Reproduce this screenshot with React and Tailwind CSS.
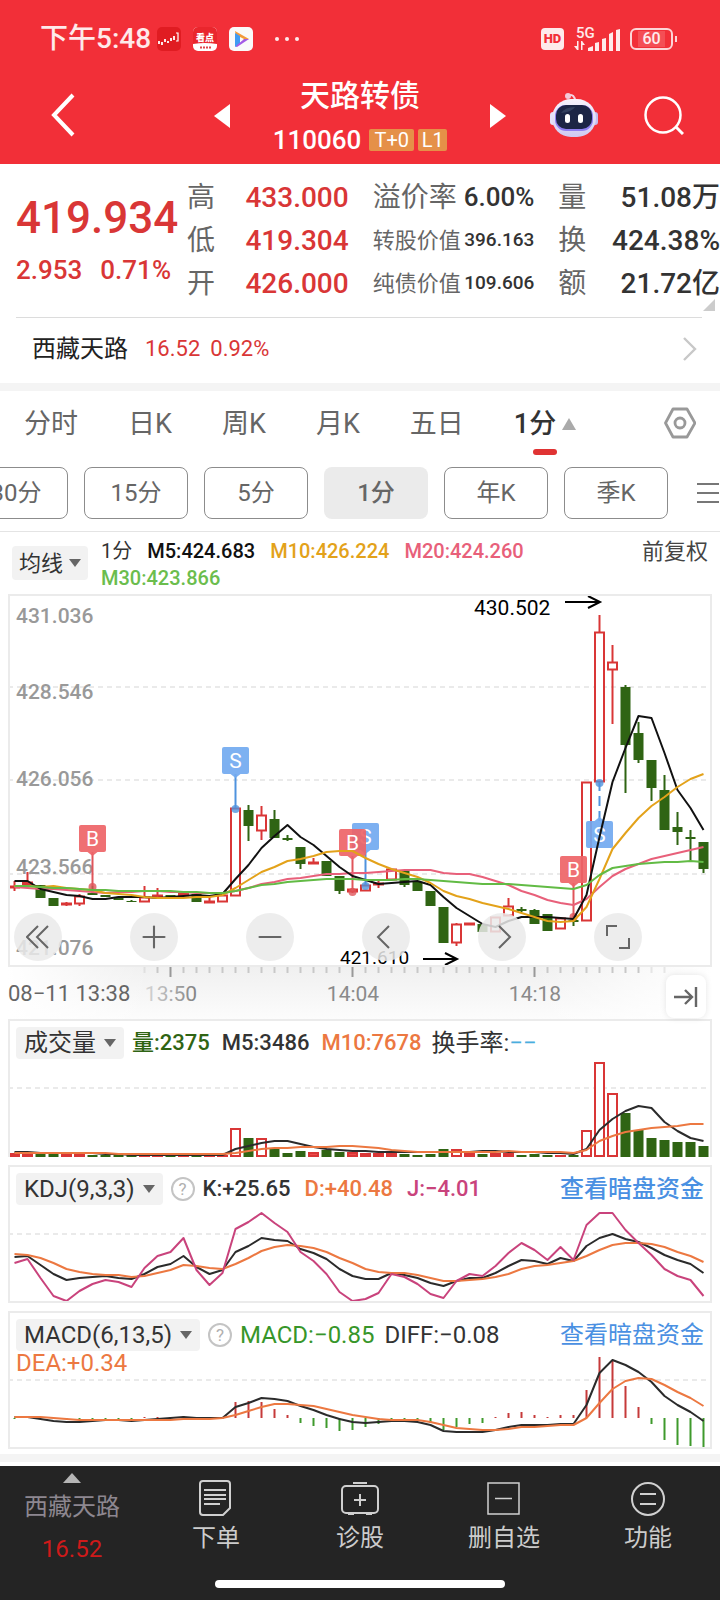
import React, { useState } from 'react';
import { Plus, Minus } from 'lucide-react';

const RED = '#d93636';
const GREEN = '#2f6413';
const STEP = 13;
const cx = i => 6.5 + i * STEP;

// [high, bodyTop, bodyBottom, low, rising]
const candles = [
  [287, 292, 294, 297, 1], [278, 288, 291, 291, 1], [291, 291, 304, 304, 0], [304, 304, 312, 312, 0],
  [308, 309, 311, 312, 1], [300, 302, 310, 312, 1], [292, 299, 301, 301, 0], [301, 301, 303, 303, 0],
  [303, 303, 306, 306, 0], [306, 307, 308, 308, 0], [292, 303, 308, 308, 1], [294, 301, 303, 303, 1],
  [301, 301, 303, 303, 0], [299, 299, 302, 302, 1], [300, 300, 308, 308, 0], [302, 307, 309, 309, 1],
  [301, 301, 308, 308, 1], [214, 214, 302, 302, 1], [211, 216, 232, 247, 0], [212, 221, 237, 246, 1],
  [216, 225, 244, 244, 0], [241, 244, 246, 247, 0], [253, 253, 270, 275, 0], [264, 268, 270, 270, 1],
  [267, 267, 282, 282, 0], [282, 282, 297, 300, 0], [294, 295, 298, 299, 1], [290, 291, 297, 297, 1],
  [287, 289, 291, 294, 1], [275, 275, 286, 286, 1], [277, 277, 291, 293, 0], [288, 288, 297, 297, 0],
  [297, 297, 312, 312, 0], [313, 313, 349, 349, 0], [329, 330, 349, 352, 1], [329, 329, 331, 331, 1],
  [330, 330, 338, 338, 0], [323, 323, 338, 338, 1], [304, 312, 322, 322, 1], [313, 315, 317, 318, 0],
  [315, 316, 330, 330, 0], [320, 320, 337, 337, 0], [324, 324, 335, 335, 1], [322, 326, 328, 332, 0],
  [188, 188, 327, 327, 1], [21, 38, 188, 188, 1], [51, 68, 76, 130, 1], [91, 93, 151, 199, 0],
  [128, 139, 166, 169, 0], [166, 166, 194, 207, 0], [181, 196, 236, 236, 0], [218, 233, 238, 251, 0],
  [236, 243, 245, 268, 0], [248, 248, 275, 279, 0]
];

const averages = [
  { color: '#e8607a', data: [293, 294, 295, 295, 296, 297, 298, 299, 298, 298, 297, 297, 298, 298, 299, 299, 299, 297, 294, 290, 288, 285, 284, 282, 280, 280, 279, 279, 278, 277, 276, 276, 276, 279, 280, 280, 283, 287, 291, 297, 301, 306, 309, 311, 305, 293, 282, 275, 270, 265, 262, 259, 256, 253] },
  { color: '#111111', data: [287, 287, 295, 298, 301, 302, 305, 305, 303, 303, 303, 304, 303, 302, 301, 302, 300, 285, 271, 254, 242, 231, 243, 251, 262, 273, 282, 286, 290, 289, 288, 287, 291, 303, 314, 322, 330, 333, 327, 323, 323, 323, 324, 325, 301, 243, 188, 154, 122, 124, 159, 196, 214, 236] },
  { color: '#e3a21a', data: [292, 292, 293, 292, 294, 295, 296, 299, 300, 301, 303, 304, 304, 304, 303, 303, 301, 294, 286, 278, 273, 267, 265, 262, 258, 257, 257, 264, 270, 275, 279, 283, 289, 297, 302, 305, 309, 312, 315, 319, 323, 327, 328, 327, 313, 285, 255, 239, 224, 212, 203, 193, 185, 180] },
  { color: '#62bb45', data: [292, 292, 293, 294, 294, 295, 296, 296, 297, 297, 297, 297, 297, 298, 298, 299, 299, 297, 294, 291, 290, 288, 287, 286, 285, 285, 285, 286, 286, 286, 285, 285, 286, 287, 288, 289, 290, 290, 290, 291, 292, 293, 294, 295, 291, 281, 274, 272, 270, 269, 268, 268, 267, 268] }
];

const volumes = [4, 4, 3, 3, 4, 4, 2, 2, 2, 2, 3, 3, 1, 3, 2, 2, 2, 29, 19, 19, 8, 4, 6, 5, 7, 5, 5, 4, 4, 4, 3, 2, 3, 8, 8, 4, 3, 4, 4, 2, 3, 2, 2, 2, 27, 95, 64, 44, 27, 19, 17, 15, 15, 11];
const volumeLines = [
  { color: '#2b2b2b', data: [133, 133, 134, 134, 134, 134, 134, 135, 135, 136, 136, 136, 136, 136, 136, 136, 136, 130, 127, 124, 122, 122, 125, 128, 130, 131, 132, 132, 133, 133, 133, 133, 133, 133, 133, 133, 132, 132, 133, 133, 133, 134, 134, 135, 130, 111, 100, 92, 87, 89, 103, 112, 119, 122] },
  { color: '#ec7841', data: [134, 134, 134, 134, 134, 134, 134, 134, 135, 135, 135, 135, 135, 135, 135, 135, 135, 134, 132, 130, 129, 129, 128, 128, 128, 127, 127, 128, 129, 131, 132, 133, 133, 133, 133, 133, 133, 133, 132, 133, 133, 133, 133, 134, 131, 122, 117, 113, 111, 109, 108, 107, 105, 105] }
];

const kdjLines = [
  { color: '#2b2b2b', data: [92, 91, 100, 109, 115, 113, 112, 111, 113, 114, 109, 102, 99, 91, 102, 109, 105, 87, 81, 73, 75, 76, 84, 88, 94, 104, 111, 114, 114, 108, 110, 113, 118, 121, 116, 113, 113, 108, 101, 95, 96, 99, 93, 96, 81, 73, 69, 74, 77, 83, 90, 95, 99, 108] },
  { color: '#ec7841', data: [89, 90, 93, 98, 104, 107, 109, 110, 110, 112, 111, 108, 105, 100, 101, 103, 104, 99, 93, 86, 82, 80, 81, 83, 87, 93, 98, 104, 107, 108, 108, 110, 113, 116, 116, 115, 114, 112, 109, 104, 101, 100, 98, 96, 91, 85, 80, 78, 78, 79, 82, 87, 91, 97] },
  { color: '#c9437c', data: [98, 94, 113, 131, 136, 126, 119, 115, 117, 122, 103, 91, 87, 73, 105, 120, 108, 64, 57, 48, 58, 67, 87, 96, 109, 127, 136, 134, 128, 109, 112, 119, 129, 133, 116, 109, 111, 101, 88, 78, 85, 95, 82, 95, 60, 48, 48, 65, 78, 90, 104, 111, 115, 131] }
];

const macdBars = [-1, 0, 0, 0, -1, -1, -1, -1, -1, -1, 1, 1, 1, 2, 1, 1, 0, 16, 17, 16, 9, 3, -5, -8, -10, -13, -12, -9, -6, -2, -3, -3, -5, -12, -9, -6, -5, 1, 5, 6, 3, 1, 3, 3, 28, 61, 57, 32, 11, -6, -22, -27, -28, -30];
const macdLines = [
  { color: '#2b2b2b', data: [106, 106, 108, 110, 111, 111, 110, 109, 109, 110, 109, 108, 107, 106, 107, 107, 107, 96, 92, 87, 88, 90, 95, 99, 104, 108, 111, 112, 111, 110, 110, 111, 114, 120, 121, 121, 121, 119, 116, 114, 114, 114, 113, 113, 94, 62, 49, 54, 61, 71, 85, 94, 101, 110] },
  { color: '#ec7841', data: [106, 106, 106, 107, 108, 109, 109, 109, 109, 109, 109, 109, 109, 108, 108, 108, 107, 104, 100, 96, 93, 93, 94, 95, 98, 101, 104, 106, 108, 109, 109, 109, 111, 114, 117, 118, 119, 119, 118, 116, 116, 115, 114, 114, 107, 92, 78, 70, 67, 68, 74, 81, 87, 95] }
];

const priceLabels = [['431.036', 29], ['428.546', 105], ['426.056', 192], ['423.566', 280], ['421.076', 361]];
const trades = [
  { i: 6, type: 'B', top: 231, dot: 292 },
  { i: 17, type: 'S', top: 153, dot: 214 },
  { i: 27, type: 'S', top: 229, dot: 291 },
  { i: 26, type: 'B', top: 235, dot: 297 },
  { i: 43, type: 'B', top: 262, dot: 322 },
  { i: 45, type: 'S', top: 227, dot: 188 }
];

const Lines = ({ lines }) => lines.map(({ color, data }) => <polyline key={color} fill="none" stroke={color} strokeWidth="2" strokeLinejoin="round" points={data.map((y, i) => `${cx(i)},${y}`).join(' ')} />);

const GridLine = ({ y }) => <line x1="0" x2="698" y1={y} y2={y} stroke="#e4e4e4" strokeWidth="1.5" strokeDasharray="5 4" />;

const Caret = () => <svg viewBox="0 0 12 8" className="h-2 w-3 shrink-0" aria-hidden="true"><path d="M0 0h12L6 8z" fill="#666" /></svg>;

function TradeMark({ i, type, top, dot }) {
  const x = cx(i);
  const buy = type === 'B';
  const above = dot > top;
  const line = buy ? '#e0555a' : '#4f93de';
  const box = buy ? '#ee6468' : '#72aaf0';
  return <g>
      <line x1={x} x2={x} y1={above ? top + 27 : top} y2={dot} stroke={line} strokeWidth="2" strokeDasharray={above ? undefined : '10 5'} />
      <circle cx={x} cy={dot + 1} r="4" fill={line} opacity="0.8" />
      <g opacity="0.92">
        <rect x={x - 13.5} y={top} width="27" height="27" rx="2" fill={box} />
        <path d={above ? `M${x - 5} ${top + 27}h10l-5 4z` : `M${x - 5} ${top}h10l-5 -4z`} fill={box} />
      </g>
      <text x={x} y={top + 21} textAnchor="middle" fontSize="21" fill="#fff">{type}</text>
    </g>;
}

function PriceChart() {
  return <svg viewBox="2 2 700 369" className="block w-full [grid-area:1/1]" role="img" aria-label="1分K线">
      {[93, 186, 280].map(y => <GridLine key={y} y={y} />)}
      {priceLabels.map(([label, y]) => <text key={label} x="8" y={y} fontSize="21" fontWeight="500" fill="#999">{label}</text>)}
      {candles.map(([high, top, bottom, low, up], i) => {
      const x = cx(i);
      if (!up) {
        return <g key={i} fill={GREEN}>
              <rect x={x - 1} y={high} width="2" height={low - high} />
              <rect x={x - 5} y={top} width="10" height={bottom - top} />
            </g>;
      }
      return <g key={i} stroke={RED} strokeWidth="2">
            <line x1={x} x2={x} y1={high} y2={top} />
            <line x1={x} x2={x} y1={bottom} y2={low} />
            <rect x={x - 4.5} y={top + 0.5} width="9" height={Math.max(bottom - top - 1, 1)} fill={bottom - top < 4 ? RED : '#fff'} />
          </g>;
    })}
      {trades.map(t => <TradeMark key={t.i} {...t} />)}
      <Lines lines={averages} />
      <g fill="none" stroke="#000" strokeWidth="2">
        <path d="M557 8h34M580 2l12 6l-12 6" />
        <path d="M415 365h34M437 359l12 6l-12 6" />
      </g>
      <text x="466" y="21" fontSize="21">430.502</text>
      <text x="332" y="370" fontSize="19">421.610</text>
    </svg>;
}

function ChartTools() {
  const btn = 'flex size-12 items-center justify-center rounded-full bg-[#eaeaea]/85 text-[#666]';
  return <div className="z-10 flex items-end gap-[68px] self-end pb-1 pl-1 [grid-area:1/1]">
      <button className={btn} aria-label="最早">
        <svg viewBox="0 0 24 24" className="size-6" fill="none" stroke="currentColor" strokeWidth="2"><path d="M12 1L1 12l11 11M22 1L11 12l11 11" /></svg>
      </button>
      <button className={btn} aria-label="放大"><Plus size={36} strokeWidth={1.4} /></button>
      <button className={btn} aria-label="缩小"><Minus size={36} strokeWidth={1.4} /></button>
      <button className={btn} aria-label="左移">
        <svg viewBox="0 0 24 24" className="size-6" fill="none" stroke="currentColor" strokeWidth="2"><path d="M15 1L4 12l11 11" /></svg>
      </button>
      <button className={btn} aria-label="右移">
        <svg viewBox="0 0 24 24" className="size-6" fill="none" stroke="currentColor" strokeWidth="2"><path d="M9 1l11 11L9 23" /></svg>
      </button>
      <button className={btn} aria-label="全屏">
        <svg viewBox="0 0 24 24" className="size-6" fill="none" stroke="currentColor" strokeWidth="2"><path d="M1 11V1h10M23 13v10H13" /></svg>
      </button>
    </div>;
}

function TimeAxis() {
  const ticks = Array.from({ length: 41 }, (_, k) => k + 10);
  return <div className="relative mx-2 bg-[linear-gradient(90deg,#fff,transparent_20%,transparent_75%,#fff),linear-gradient(#f0f0f0,#fcfcfc)]">
      <svg viewBox="0 0 704 52" className="block w-full" fontSize="21" fill="#8a8a8a">
        <defs>
          <linearGradient id="fade">
            <stop offset="0" stopColor="#d8d8d8" />
            <stop offset="1" stopColor="#808080" />
          </linearGradient>
        </defs>
        {ticks.map(i => {
        const major = (i - 12) % 14 === 0;
        return <line key={i} x1={cx(i)} x2={cx(i)} y1="0" y2={major ? 10 : 6} stroke={major ? '#999' : '#c8c8c8'} strokeWidth="2" opacity={i === 10 || i > 48 ? 0.4 : 1} />;
      })}
        <text x="0" y="34" fontSize="22" fill="#666">08−11 13:38</text>
        <text x="163" y="34" textAnchor="middle" fill="url(#fade)">13:50</text>
        <text x="345" y="34" textAnchor="middle">14:04</text>
        <text x="527" y="34" textAnchor="middle">14:18</text>
      </svg>
      <button aria-label="最新" className="absolute top-2 right-1.5 flex h-[43px] w-10 items-center justify-center rounded-lg bg-white shadow-[0_0_6px_rgba(0,0,0,0.1)]">
        <svg viewBox="0 0 24 24" className="size-6" fill="none" stroke="#666" strokeWidth="2.4"><path d="M0 12h17M11 5l7 7l-7 7M22 2v20" /></svg>
      </button>
    </div>;
}

const Picker = ({ children }) => <button className="flex h-8 items-center gap-2 rounded bg-[#f2f2f2] px-2 text-2xl font-normal text-[#333]">{children}<Caret /></button>;

const Help = () => <button aria-label="说明" className="flex size-6 items-center justify-center rounded-full border-2 border-[#c4c4c4] text-[17px] leading-none font-normal text-[#b0b0b0]">?</button>;

const DarkFunds = () => <a href="#funds" className="ml-auto text-2xl text-[#4a90e2]">查看暗盘资金</a>;

function Header() {
  return <header className="bg-[#f22f38] text-white">
      <div className="flex h-[78px] items-center pr-[43px] pl-10 text-white/90">
        <span className="text-[28px] font-medium">下午5:48</span>
        <div className="ml-1.5 flex gap-3">
          <svg viewBox="0 0 24 24" className="size-6">
            <rect width="24" height="24" rx="5" fill="#e01c22" />
            <path d="M2 17v-3M5 18v-3M8 15v-3M11 16v-2M14 14v-3M17 13v-4" stroke="#fff" strokeWidth="1.8" />
            <path d="M19 6h2v8h-2" fill="none" stroke="#fff" strokeWidth="1.2" />
          </svg>
          <svg viewBox="0 0 24 24" className="size-6">
            <rect width="24" height="24" rx="5" fill="#fff" />
            <path d="M0 17V5a5 5 0 0 1 5-5h14a5 5 0 0 1 5 5v12q-12-2-24 0" fill="#e9262d" />
            <text x="12" y="14" textAnchor="middle" fontSize="9" fontWeight="900" fill="#fff">看点</text>
            <path d="M7 20.500h11" stroke="#e0474b" strokeWidth="1.800" strokeDasharray="2 1" />
          </svg>
          <svg viewBox="0 0 24 24" className="size-6">
            <rect width="24" height="24" rx="5" fill="#fafafa" />
            <path d="M6 4l7 4l7 4l-5 2l-8-4z" fill="#f39a3a" />
            <path d="M6 6l5 3v7l-4 4q-1 0-1-1z" fill="#3f9bf2" />
            <path d="M20 12L8 20q-1 0-1-1l8-7z" fill="#a35ae6" />
            <path d="M11 10l4 2l-4 3z" fill="#fafafa" />
          </svg>
        </div>
        <svg viewBox="0 0 24 4" className="ml-[22px] h-1 w-6" fill="currentColor"><circle cx="2" cy="2" r="2" /><circle cx="12" cy="2" r="2" /><circle cx="22" cy="2" r="2" /></svg>
        <span className="ml-auto flex h-[22px] w-[23px] items-center justify-center rounded bg-white/90 text-[13px] font-black text-[#f22f38]">HD</span>
        <svg viewBox="0 0 48 30" className="ml-2.5 h-[30px] w-12" fill="currentColor">
          <text x="2" y="14" fontSize="15" fontWeight="500">5G</text>
          <path d="M3 17h1.500v9h-1.500zM3 26l-3-4h3zM7 17h1.500v9h-1.500zM8 17l3 4H8zM14 24l5-2v5h-5zM21 19l4-1v9h-4zM28 15l4-1v13h-4zM35 10l4-2v19h-4zM42 6l4-1v22h-4z" />
        </svg>
        <div className="ml-2 flex h-[22px] w-[43px] items-center justify-center rounded-md border-2 border-white/80 text-base font-medium"><span className="bg-white/15 px-1 leading-4">60</span></div>
        <span className="ml-0.5 h-1.5 w-0.5 bg-white/80" />
      </div>

      <div className="grid h-[86px] grid-cols-[1fr_292px_1fr]">
        <div className="flex items-center pb-3 pl-[51px]">
          <button aria-label="返回"><svg viewBox="0 0 24 44" className="h-11 w-6" fill="none" stroke="#fff" strokeWidth="4"><path d="M22 2L3 22l19 20" /></svg></button>
        </div>
        <div className="flex items-start justify-between">
          <button aria-label="上一只" className="mt-[26px]"><svg viewBox="0 0 16 24" className="h-6 w-4"><path d="M16 0v24L0 12z" fill="#fff" /></svg></button>
          <div className="flex flex-col items-center">
            <h1 className="text-[30px] leading-9 font-medium">天路转债</h1>
            <div className="mt-2.5 flex items-center gap-1 leading-8">
              <span className="mr-1 text-[26px] font-medium">110060</span>
              <span className="flex h-[22px] w-[45px] items-center justify-center rounded-xs bg-[#e59048] text-xl">T+0</span>
              <span className="flex h-[22px] w-[29px] items-center justify-center rounded-xs bg-[#e59048] text-xl">L1</span>
            </div>
          </div>
          <button aria-label="下一只" className="mt-[26px]"><svg viewBox="0 0 16 24" className="h-6 w-4"><path d="M0 0v24l16-12z" fill="#fff" /></svg></button>
        </div>
        <div className="flex items-center justify-between pr-9 pb-3 pl-11">
          <button aria-label="智能助手">
            <svg viewBox="0 0 48 44" className="h-11 w-12">
              <defs>
                <linearGradient id="shell" x1="0" y1="0" x2="0" y2="1"><stop offset="0" stopColor="#f7f3fc" /><stop offset="1" stopColor="#cfcaf2" /></linearGradient>
              </defs>
              <path d="M18 2q7-1 7 6" fill="none" stroke="#f5d5e2" strokeWidth="2" />
              <circle cx="18" cy="3" r="3" fill="#f3c9d8" />
              <rect x="0" y="19" width="6" height="13" rx="3" fill="#e6e1f7" />
              <rect x="42" y="19" width="6" height="13" rx="3" fill="#c4bdee" />
              <rect x="2" y="6" width="44" height="38" rx="19" fill="url(#shell)" />
              <rect x="5" y="12" width="38" height="26" rx="11" fill="#8f7ff0" />
              <rect x="6" y="12" width="36" height="24" rx="10" fill="#1c2545" />
              <path d="M11 20q4-6 14-6q-3 5-14 6z" fill="#33405f" />
              <rect x="15" y="21" width="5" height="9" rx="2.500" fill="#fff" />
              <rect x="28" y="21" width="5" height="9" rx="2.500" fill="#fff" />
            </svg>
          </button>
          <button aria-label="搜索"><svg viewBox="0 0 40 40" className="size-10" fill="none" stroke="#fff" strokeWidth="2.500"><circle cx="19" cy="20" r="17.500" /><path d="M32 32l7 7" strokeWidth="3" /></svg></button>
        </div>
      </div>
    </header>;
}

const quoteRows = [
  [['高', '433.000'], ['低', '419.304'], ['开', '426.000']],
  [['溢价率', '6.00%'], ['转股价值', '396.163'], ['纯债价值', '109.606']],
  [['量', '51.08万'], ['换', '424.38%'], ['额', '21.72亿']]
];

function Quote() {
  return <section>
      <div className="relative flex h-[153px] pt-3 pl-4 text-[#d93636]">
        <div className="w-[171px] shrink-0 pt-4 font-medium whitespace-nowrap">
          <div className="text-[44px] leading-[52px]">419.934</div>
          <div className="mt-2.5 flex gap-[18px] text-[26px] leading-8"><span>2.953</span><span>0.71%</span></div>
        </div>
        <div className="grid flex-1 grid-cols-3 gap-6">
          {quoteRows.map((rows, c) => <dl key={c}>
              {rows.map(([label, value], r) => {
            const small = c === 1 && r > 0;
            return <div key={label} className="flex h-[43px] items-center justify-between whitespace-nowrap">
                    <dt className={small ? 'text-[22px] text-[#666]' : 'text-[28px] text-[#666]'}>{label}</dt>
                    <dd className={`font-medium ${c === 0 ? 'text-[28px]' : c === 2 ? 'text-[28px] text-[#333]' : small ? 'text-[19px] text-[#333]' : 'text-[26px] text-[#333]'}`}>{value}</dd>
                  </div>;
          })}
            </dl>)}
        </div>
        <svg viewBox="0 0 12 12" className="absolute right-[5px] bottom-1.5 size-3"><path d="M12 0v12H0z" fill="#ccc" /></svg>
      </div>
      <a href="#stock" className="mr-[18px] ml-4 flex h-[66px] items-center border-t border-[#dcdcdc] pb-1 pl-4">
        <span className="text-2xl text-[#222]">西藏天路</span>
        <span className="ml-[17px] text-[22px] text-[#d93636]">16.52</span>
        <span className="ml-2.5 text-[22px] text-[#d93636]">0.92%</span>
        <svg viewBox="0 0 14 24" className="ml-auto mr-[5px] h-6 w-3.5" fill="none" stroke="#c8c8c8" strokeWidth="2.400"><path d="M1 1l11 11L1 23" /></svg>
      </a>
      <div className="h-2 bg-[#f4f4f4]" />
    </section>;
}

function Periods() {
  const [period, setPeriod] = useState('1分');
  return <nav className="overflow-hidden border-b border-[#e4e4e4] pb-3 text-[#666]">
      <div className="flex h-[76px] items-start gap-[50px] pt-[13px] pr-6 pl-6 text-[27px] leading-10 whitespace-nowrap">
        {['分时', '日K', '周K', '月K', '五日'].map(tab => <button key={tab}>{tab}</button>)}
        <button className="flex flex-col items-center font-medium text-[#333]">
          <span className="flex items-center gap-1.5">1分<svg viewBox="0 0 14 12" className="h-3 w-3.5"><path d="M7 0l7 12H0z" fill="#aaa" /></svg></span>
          <span className="mt-[5px] h-1.5 w-6 rounded-full bg-[#e03333]" />
        </button>
        <button aria-label="设置" className="ml-auto mt-[3px]">
          <svg viewBox="0 0 32 32" className="size-8" fill="none" stroke="#999" strokeWidth="2.800" strokeLinejoin="round"><path d="M9 2h14l8 14l-8 14H9L1.500 16z" /><circle cx="16" cy="16" r="5" /></svg>
        </button>
      </div>
      <div className="-ml-9 flex items-center gap-4">
        {['30分', '15分', '5分', '1分', '年K', '季K'].map(p => <button key={p} onClick={() => setPeriod(p)} className={`h-[52px] w-[104px] shrink-0 rounded-lg text-2xl ${p === period ? 'bg-[#ebebeb] font-medium' : 'border border-[#8c8c8c]'}`}>{p}</button>)}
        <button aria-label="更多周期" className="ml-[13px] shrink-0"><svg viewBox="0 0 22 20" className="h-5 w-[22px]" stroke="#777" strokeWidth="2"><path d="M0 1h22M0 10h22M0 19h22" /></svg></button>
      </div>
    </nav>;
}

function BottomNav() {
  const item = 'flex flex-1 flex-col items-center pt-3.5 text-2xl leading-9 text-[#ccc]';
  const icon = 'size-9';
  return <footer className="mt-1 bg-[#242424]">
      <div className="flex h-[114px]">
        <button className="flex flex-1 flex-col items-center pt-[7px] text-2xl text-[#8d8790]">
          <svg viewBox="0 0 18 10" className="h-2.5 w-[18px]"><path d="M9 0l9 10H0z" fill="#b5b5b5" /></svg>
          <span className="mt-1.5 leading-9">西藏天路</span>
          <span className="mt-1.5 leading-9 text-[#cf1a1a]">16.52</span>
        </button>
        <button className={item}>
          <svg viewBox="0 0 36 36" className={icon} fill="none" stroke="#d0d0d0" strokeWidth="2"><path d="M5 1h24a3 3 0 0 1 3 3v24l-7 7H5a3 3 0 0 1-3-3V4a3 3 0 0 1 3-3zM6 10h22M6 15h22M6 19h22M6 24h16" /></svg>
          <span className="mt-1">下单</span>
        </button>
        <button className={item}>
          <svg viewBox="0 0 38 36" className="h-9 w-[38px]" fill="none" stroke="#d0d0d0" strokeWidth="2"><rect x="1" y="6" width="36" height="27" rx="4" /><path d="M12 3h14M7 34h6M25 34h6M19 14v12M13 20h12" /></svg>
          <span className="mt-1">诊股</span>
        </button>
        <button className={item}>
          <svg viewBox="0 0 36 36" className={icon} fill="none" stroke="#d0d0d0" strokeWidth="1.500"><path d="M2 3h31v31H2zM9 18.500h17" /></svg>
          <span className="mt-1">删自选</span>
        </button>
        <button className={item}>
          <svg viewBox="0 0 36 36" className={icon} fill="none" stroke="#d0d0d0" strokeWidth="2"><circle cx="18" cy="19" r="16" /><path d="M10 14h16M10 24h16" /></svg>
          <span className="mt-1">功能</span>
        </button>
      </div>
      <div className="flex h-5 justify-center"><span className="h-2 w-[290px] rounded-full bg-white" /></div>
    </footer>;
}

export default function App() {
  return <div className="min-h-screen overflow-hidden bg-white font-[Roboto,'Noto_Sans_CJK_SC',sans-serif]">
      <Header />
      <Quote />
      <Periods />

      <div className="flex h-[62px] items-start px-3">
        <button className="mt-3.5 flex h-[34px] w-[76px] shrink-0 items-center justify-center gap-1.5 rounded bg-[#f2f2f2] text-[22px] text-[#333]">均线<Caret /></button>
        <div className="ml-[13px] flex flex-1 flex-wrap gap-x-[15px] pt-1.5 text-xl leading-[27px] font-medium">
          <span className="font-normal text-[#333]">1分</span>
          <span className="text-[#111]">M5:424.683</span>
          <span className="text-[#e3a21a]">M10:426.224</span>
          <span className="text-[#e8607a]">M20:424.260</span>
          <span className="text-[#6bbd4d]">M30:423.866</span>
        </div>
        <button className="pt-1.5 text-[22px] leading-[27px] text-[#444]">前复权</button>
      </div>

      <div className="mx-2 grid border-2 border-[#ebebeb]">
        <PriceChart />
        <ChartTools />
      </div>
      <TimeAxis />

      <div className="mx-2 grid gap-2">
        <section className="grid border-2 border-b-0 border-[#ebebeb]">
          <svg viewBox="2 2 700 136" className="block w-full [grid-area:1/1]" role="img" aria-label="成交量">
            <GridLine y={69} />
            {volumes.map((h, i) => candles[i][4] ? <rect key={i} x={cx(i) - 4.5} y={139 - h} width="9" height={Math.max(h - 2, 1)} fill={h > 7 ? '#fff' : '#f04a4a'} stroke={RED} strokeWidth="2" /> : <rect key={i} x={cx(i) - 5} y={138 - h} width="10" height={h} fill={GREEN} />)}
            <Lines lines={volumeLines} />
          </svg>
          <div className="flex items-center self-start px-1.5 pt-1.5 text-[22px] leading-8 font-medium text-[#333] [grid-area:1/1]">
            <Picker>成交量</Picker>
            <span className="ml-2 text-[#2f6413]">量:2375</span>
            <span className="ml-3">M5:3486</span>
            <span className="ml-3 text-[#ec7841]">M10:7678</span>
            <span className="ml-2.5 text-2xl font-normal">换手率:<span className="text-[#4aaede]">−−</span></span>
          </div>
        </section>

        <section className="grid border-2 border-[#ebebeb]">
          <svg viewBox="2 2 700 134" className="block w-full [grid-area:1/1]" role="img" aria-label="KDJ">
            <GridLine y={69} />
            <Lines lines={kdjLines} />
          </svg>
          <div className="flex items-center self-start px-1.5 pt-1.5 text-[22px] leading-8 font-medium text-[#333] [grid-area:1/1]">
            <Picker>KDJ(9,3,3)</Picker>
            <span className="ml-2 flex"><Help /></span>
            <span className="ml-2">K:+25.65</span>
            <span className="ml-3.5 text-[#ec7841]">D:+40.48</span>
            <span className="ml-3.5 text-[#c9437c]">J:−4.01</span>
            <DarkFunds />
          </div>
        </section>

        <section className="grid border-2 border-[#ebebeb]">
          <svg viewBox="2 2 700 134" className="block w-full [grid-area:1/1]" role="img" aria-label="MACD">
            <GridLine y={69} />
            {macdBars.map((h, i) => <rect key={i} x={cx(i) - 1} y={h > 0 ? 107 - h : 107} width="2" height={Math.abs(h)} fill={h > 0 ? '#c63a3a' : '#3f9a2c'} />)}
            <Lines lines={macdLines} />
          </svg>
          <div className="self-start px-1.5 pt-1.5 text-2xl text-[#333] [grid-area:1/1]">
            <div className="flex items-center leading-8">
              <Picker>MACD(6,13,5)</Picker>
              <span className="ml-2 flex"><Help /></span>
              <span className="ml-2 text-[#37962a]">MACD:−0.85</span>
              <span className="ml-2.5">DIFF:−0.08</span>
              <DarkFunds />
            </div>
            <div className="leading-6 text-[#ec7841]">DEA:+0.34</div>
          </div>
        </section>
      </div>

      <div className="mt-[5px] h-2 bg-[#f4f4f4]" />
      <BottomNav />
    </div>;
}
